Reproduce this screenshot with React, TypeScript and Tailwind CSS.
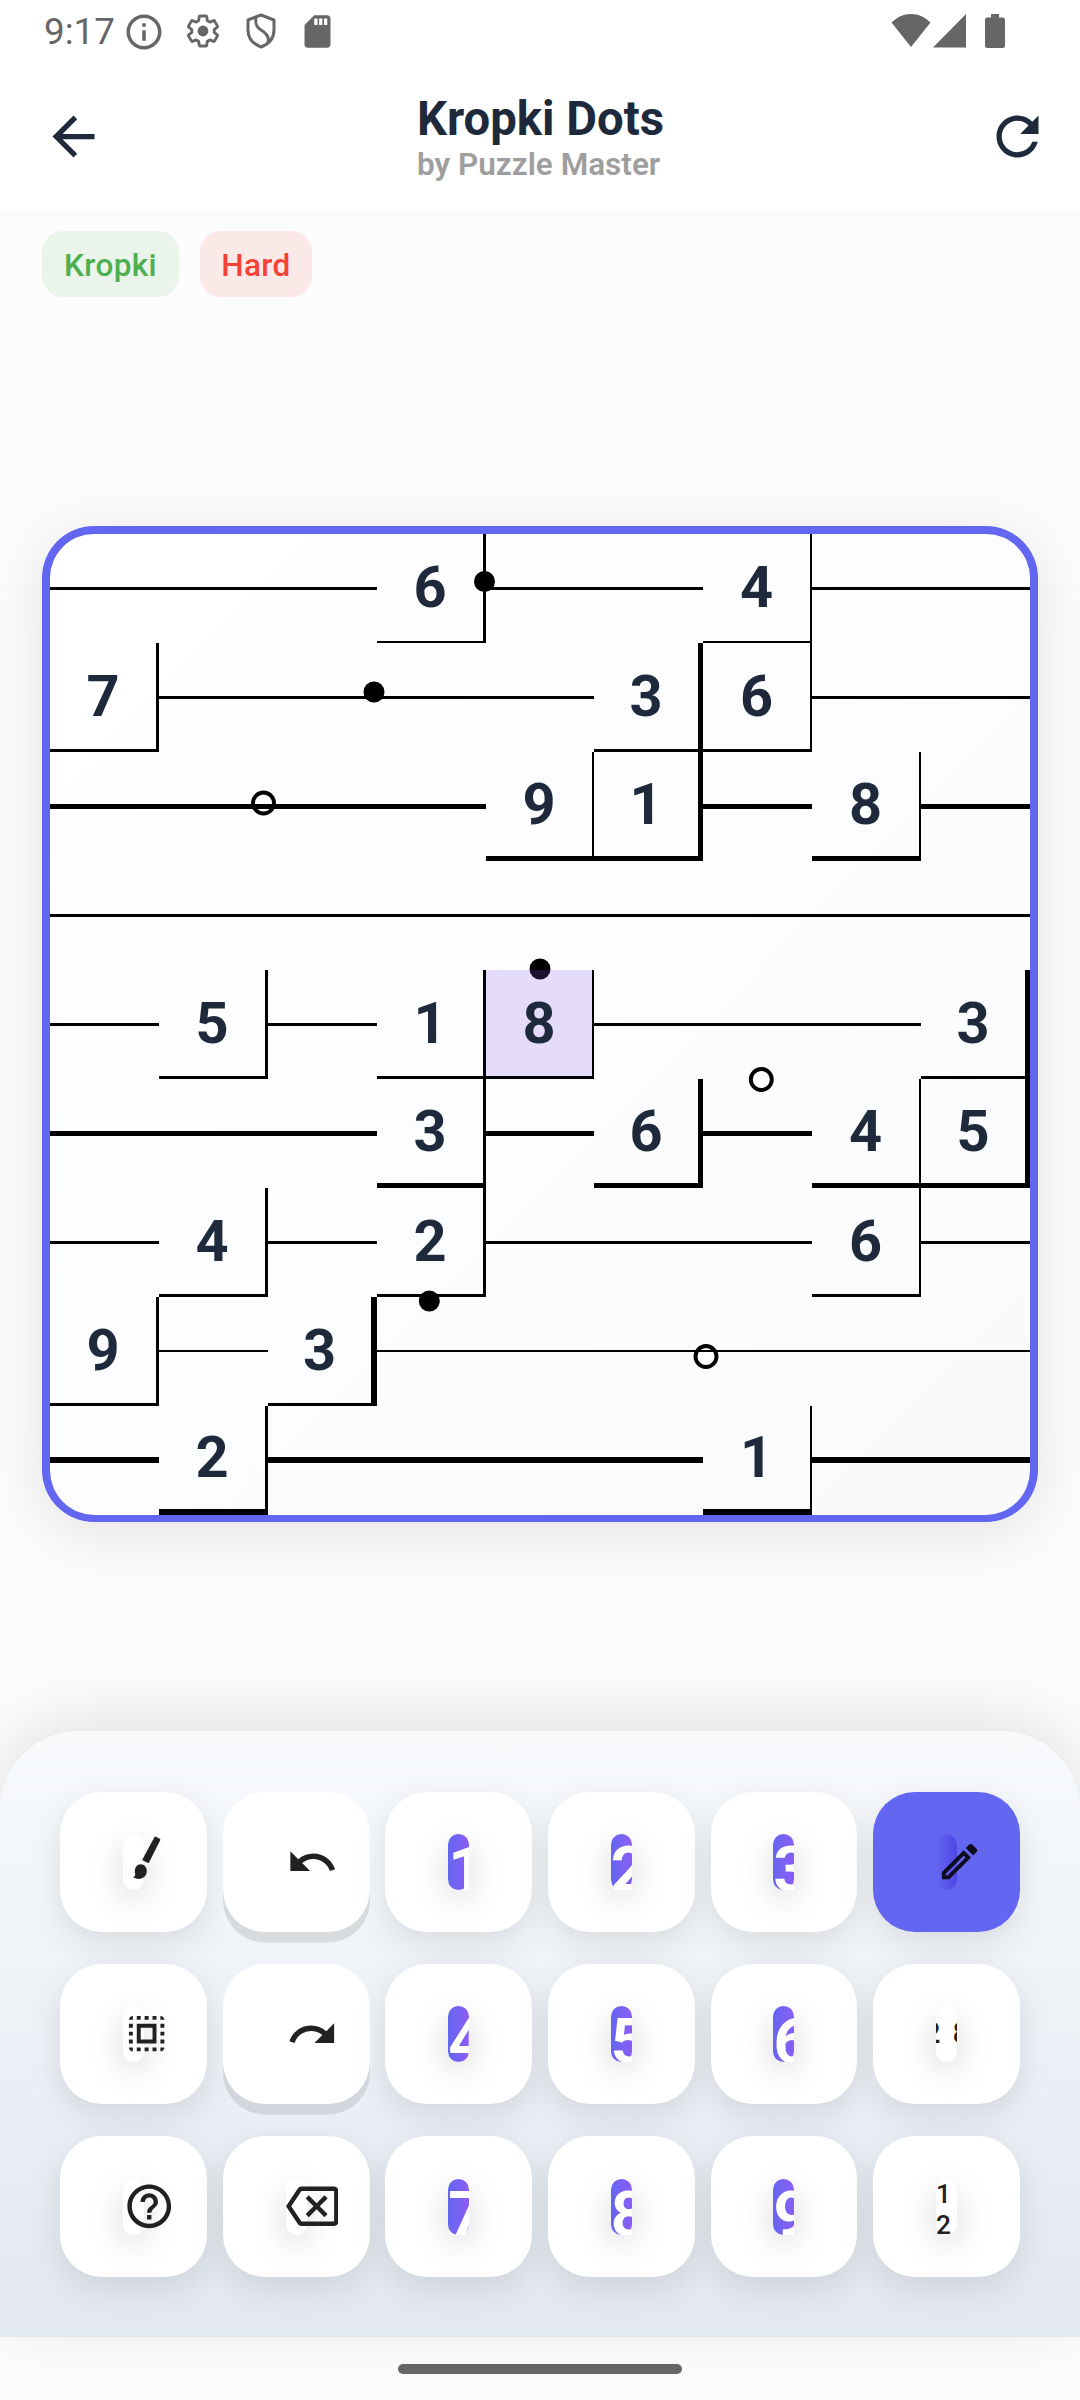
import type { ReactNode } from "react";
import {
  MdArrowBack,
  MdHelpOutline,
  MdInfoOutline,
  MdOutlineBackspace,
  MdOutlineEdit,
  MdRedo,
  MdRefresh,
  MdSdCard,
  MdSelectAll,
  MdUndo,
} from "react-icons/md";

// 0 marks an empty cell.
const GIVENS = [
  [0, 0, 0, 6, 0, 0, 4, 0, 0],
  [7, 0, 0, 0, 0, 3, 6, 0, 0],
  [0, 0, 0, 0, 9, 1, 0, 8, 0],
  [0, 0, 0, 0, 0, 0, 0, 0, 0],
  [0, 5, 0, 1, 8, 0, 0, 0, 3],
  [0, 0, 0, 3, 0, 6, 0, 4, 5],
  [0, 4, 0, 2, 0, 0, 0, 6, 0],
  [9, 0, 3, 0, 0, 0, 0, 0, 0],
  [0, 2, 0, 0, 0, 0, 1, 0, 0],
];

const ROW_LINE = [3, 3, 5, 3, 3, 5, 3, 2, 6];
const ROW_EDGE = [2, 3, 5, 3, 3, 5, 3, 3, 6];
const COL_EDGE = [3, 3, 6, 3, 2, 5, 2, 2, 5];

const SELECTED = { row: 4, col: 4 };

const DOTS = [
  { x: 434.5, y: 47.5, filled: true },
  { x: 324, y: 158, filled: true },
  { x: 213.5, y: 269, filled: false },
  { x: 490, y: 435, filled: true },
  { x: 711.3, y: 545.5, filled: false },
  { x: 379.3, y: 767, filled: true },
  { x: 656, y: 822.5, filled: false },
];

function Cell({ row, col }: { row: number; col: number }) {
  const value = GIVENS[row][col];
  if (!value) {
    return (
      <div
        className="bg-black"
        style={{ height: ROW_LINE[row], marginTop: Math.floor((109 - ROW_LINE[row]) / 2) }}
      />
    );
  }
  const selected = row === SELECTED.row && col === SELECTED.col;
  return (
    <div
      className={`flex h-[109px] items-center justify-center border-black pt-px text-[57.75px] leading-none font-bold text-[#1e293b] ${
        selected ? "bg-[#8b5cf6]/20 bg-clip-padding" : ""
      }`}
      style={{ borderBottomWidth: ROW_EDGE[row], borderRightWidth: COL_EDGE[col] }}
    >
      {value}
    </div>
  );
}

function Board() {
  return (
    <div className="relative h-[996px] w-[996px] rounded-[52px] border-8 border-b-[7px] border-[#6366f1] bg-linear-135 from-white to-[#f8fafc] shadow-[0_10.5px_63px_rgba(0,0,0,0.1)]">
      <svg className="absolute top-0 left-0" width="980" height="981">
        {DOTS.map((d) => (
          <circle
            key={`${d.x}-${d.y}`}
            cx={d.x}
            cy={d.y}
            r={10.5}
            fill={d.filled ? "#000" : "#fff"}
            stroke={d.filled ? "none" : "#000"}
            strokeWidth={3.9}
          />
        ))}
      </svg>
      <div className="relative grid auto-rows-[109px] grid-cols-[109px_109px_109px_109px_108px_109px_109px_109px_109px] items-start">
        {GIVENS.map((cells, row) => cells.map((_, col) => <Cell key={`${row}-${col}`} row={row} col={col} />))}
      </div>
    </div>
  );
}

function Key({ tone = "plain", children }: { tone?: "plain" | "active" | "disabled"; children: ReactNode }) {
  const tones = {
    plain: "bg-white shadow-[0_10.5px_33px_rgba(0,0,0,0.1)]",
    active: "bg-[#6366f1] shadow-[0_10.5px_33px_rgba(0,0,0,0.1)]",
    disabled: "bg-white shadow-[0_10.5px_0_rgba(0,0,0,0.1)]",
  };
  return <div className={`flex items-center justify-center rounded-[42px] ${tones[tone]}`}>{children}</div>;
}

function Pill({ look = "white", children }: { look?: "white" | "active" | "clear"; children: ReactNode }) {
  const looks = {
    white: "bg-white shadow-[0_10.5px_33px_rgba(0,0,0,0.17)]",
    active: "bg-linear-to-r from-[#6366f1] to-[#4f46e5]",
    clear: "",
  };
  return (
    <div className={`flex h-14 w-[21px] items-center rounded-full text-[#212121] ${looks[look]}`}>{children}</div>
  );
}

function DigitKey({ digit }: { digit: number }) {
  return (
    <Key>
      <div className="h-14 w-[21px] rounded-full bg-linear-to-r from-[#6366f1] to-[#8b5cf6] shadow-[0_10.5px_33px_rgba(0,0,0,0.17)]">
        <div className="h-14 w-[21px] overflow-hidden text-[63px] leading-[72px] font-bold text-white">{digit}</div>
      </div>
    </Key>
  );
}

function BrushIcon() {
  return (
    <svg className="h-14 w-10 shrink-0" viewBox="0 0 40 56" fill="currentColor">
      <path d="M31.4 3.2q.6-1 1.6-.5l3.7 2q1 .6.5 1.6L26 28.4q-.4.9-1.3.4l-4.8-2.3q-.9-.4-.4-1.3z" />
      <path d="M17.6 30.3c3.7 0 6.2 2.9 6.2 6.7 0 4.6-3.4 7.9-8.2 7.9-2.4 0-4.2-.6-5.5-1.8 1.9-.6 2.4-1.6 2-3.3-1.1-5.1 1.4-9.5 5.5-9.5z" />
    </svg>
  );
}

function GearIcon() {
  return (
    <svg className="ml-[20px] size-9" viewBox="0 0 24 24" fill="currentColor">
      <path
        d="M19.43 12.98c.04-.32.07-.64.07-.98 0-.34-.03-.66-.07-.98l2.11-1.65c.19-.15.24-.42.12-.64l-2-3.46a.5.5 0 0 0-.61-.22l-2.49 1c-.52-.4-1.08-.73-1.69-.98l-.38-2.65A.488.488 0 0 0 14 2h-4c-.25 0-.46.18-.49.42l-.38 2.65c-.61.25-1.17.59-1.69.98l-2.49-1a.566.566 0 0 0-.18-.03c-.17 0-.34.09-.43.25l-2 3.46c-.13.22-.07.49.12.64l2.11 1.65c-.04.32-.07.65-.07.98 0 .33.03.66.07.98l-2.11 1.65c-.19.15-.24.42-.12.64l2 3.46a.5.5 0 0 0 .61.22l2.49-1c.52.4 1.08.73 1.69.98l.38 2.65c.03.24.24.42.49.42h4c.25 0 .46-.18.49-.42l.38-2.65c.61-.25 1.17-.59 1.69-.98l2.49 1c.06.02.12.03.18.03.17 0 .34-.09.43-.25l2-3.46c.12-.22.07-.49-.12-.64z"
        fill="none"
        stroke="currentColor"
        strokeWidth="1.9"
        strokeLinejoin="round"
      />
      <circle cx="12" cy="12" r="3.6" />
    </svg>
  );
}

function StatusBar() {
  return (
    <div className="flex h-[62px] items-center text-[#666]">
      <span className="ml-[44px] w-[72px] pt-[2px] text-[36.75px] leading-none">9:17</span>
      <MdInfoOutline className="mt-px ml-[7px] size-[42px]" />
      <GearIcon />
      <svg className="ml-[24px] h-9 w-8" viewBox="0 0 32 36" fill="none" stroke="currentColor" strokeWidth="3">
        <path d="M16 2 29 7v10c0 8-5 14-13 17C8 31 3 25 3 17V7z" strokeLinejoin="round" />
        <path d="M11 4.5c-1 6 0 9.5 5 12.5 6 3.5 9 8 6.5 14" />
      </svg>
      <MdSdCard className="mt-px ml-[21px] size-[39px]" />
      <svg className="ml-[554px] h-[34px] w-10" viewBox="0 0 40 34" fill="currentColor">
        <path d="M20 0c7.5 0 14 3.3 19.500 8.600L20 33 .5 8.600C6 3.300 12.500 0 20 0z" />
      </svg>
      <svg className="ml-[2px] h-[34px] w-[33px]" viewBox="0 0 33 34" fill="currentColor">
        <path d="M33 0v33.500H0z" />
      </svg>
      <svg className="ml-[19px] h-[34px] w-5" viewBox="0 0 20 34" fill="currentColor">
        <path d="M6 0h8v3.500h3.500Q20 3.500 20 6v25.500q0 2.500-2.500 2.500h-15Q0 34 0 31.500V6q0-2.500 2.500-2.500H6z" />
      </svg>
    </div>
  );
}

export default function App() {
  return (
    <div className="flex h-[2400px] w-[1080px] flex-col overflow-hidden bg-[#fcfcfc] font-[Roboto,sans-serif]">
      <header className="h-[210px] bg-white">
        <StatusBar />
        <div className="flex h-[148px] items-center justify-between pr-[31px] pl-[42px] text-[#1e293b]">
          <MdArrowBack className="size-[63px]" />
          <div className="-ml-[10px] flex flex-col pt-[3px]">
            <h1 className="text-[47.25px] leading-[55px] font-bold">Kropki Dots</h1>
            <p className="-mt-px text-[31.5px] leading-[37px] font-semibold text-[#9e9e9e]">by Puzzle Master</p>
          </div>
          <MdRefresh className="size-[63px]" />
        </div>
      </header>

      <div className="mt-[21px] ml-[42px] flex h-[66px] gap-[21px] text-[31.5px] leading-none font-medium tracking-[0.4px]">
        <span className="flex w-[137px] items-center justify-center rounded-[21px] bg-[#4caf50]/10 pt-[3px] text-[#4caf50]">
          Kropki
        </span>
        <span className="flex w-[112px] items-center justify-center rounded-[21px] bg-[#f44336]/10 pt-[3px] text-[#f44336]">
          Hard
        </span>
      </div>

      <main className="mt-[229px] ml-[42px] h-[996px]">
        <Board />
      </main>

      <section className="mt-[209px] grid h-[606px] grid-cols-6 grid-rows-[140px_140px_141px] gap-x-[15.75px] gap-y-8 rounded-t-[79px] bg-linear-to-b from-[#f8fafc] to-[#e2e8f0] px-[60px] pt-[61px] shadow-[0_-13px_63px_rgba(0,0,0,0.1)]">
        <Key>
          <Pill>
            <BrushIcon />
          </Pill>
        </Key>
        <Key tone="disabled">
          <Pill look="clear">
            <MdUndo className="size-[52.5px] shrink-0" />
          </Pill>
        </Key>
        <DigitKey digit={1} />
        <DigitKey digit={2} />
        <DigitKey digit={3} />
        <Key tone="active">
          <Pill look="active">
            <MdOutlineEdit className="size-[47.25px] shrink-0 text-[#0d0d1f]" />
          </Pill>
        </Key>

        <Key>
          <Pill>
            <MdSelectAll className="size-[47.25px] shrink-0" />
          </Pill>
        </Key>
        <Key tone="disabled">
          <Pill look="clear">
            <MdRedo className="size-[52.5px] shrink-0" />
          </Pill>
        </Key>
        <DigitKey digit={4} />
        <DigitKey digit={5} />
        <DigitKey digit={6} />
        <Key>
          <Pill>
            <span className="flex h-14 w-[21px] items-center justify-center overflow-hidden rounded-full text-[29px] font-bold whitespace-nowrap [word-spacing:5px]">
              2 8
            </span>
          </Pill>
        </Key>

        <Key>
          <Pill>
            <MdHelpOutline className="size-[52.5px] shrink-0" />
          </Pill>
        </Key>
        <Key>
          <Pill>
            <MdOutlineBackspace className="size-[52.5px] shrink-0" />
          </Pill>
        </Key>
        <DigitKey digit={7} />
        <DigitKey digit={8} />
        <DigitKey digit={9} />
        <Key>
          <Pill>
            <span className="h-14 w-[21px] text-[26.25px] leading-[31px] font-medium">1 2</span>
          </Pill>
        </Key>
      </section>

      <div className="mx-auto mt-[27px] h-[10px] w-[284px] rounded-full bg-[#666]" />
    </div>
  );
}
